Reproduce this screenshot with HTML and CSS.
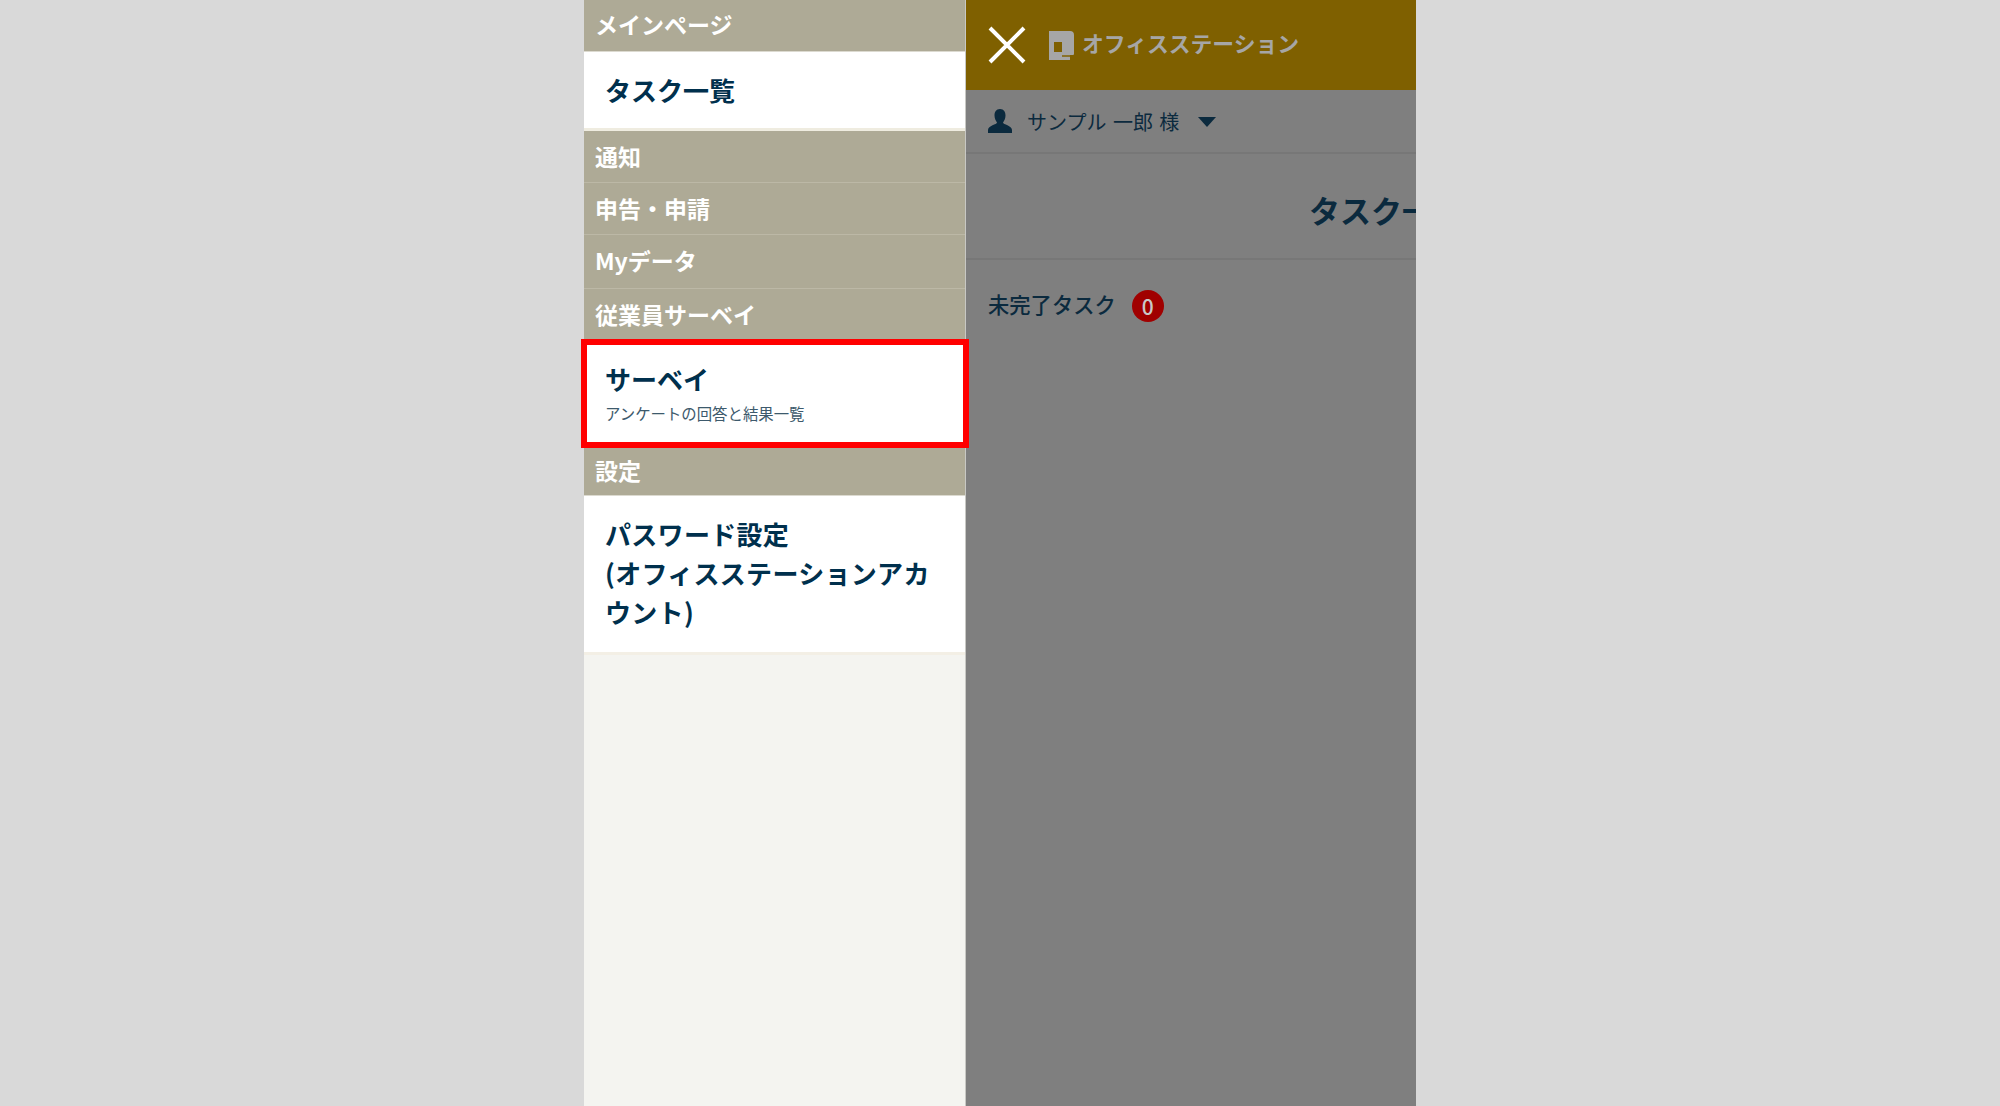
FILE: index.html
```html
<!DOCTYPE html>
<html lang="ja">
<head>
<meta charset="utf-8">
<title>タスク一覧</title>
<link rel="stylesheet" href="styles.css">
</head>
<body>
<div class="phone">
  <nav class="side">
    <div class="sec sec-first">メインページ</div>
    <a class="item item-task">タスク一覧</a>
    <div class="sec sec-a">通知</div>
    <div class="sec sec-a">申告・申請</div>
    <div class="sec sec-b">Myデータ</div>
    <div class="sec sec-c">従業員サーベイ</div>
    <a class="item item-survey">
      <span class="item-title">サーベイ</span>
      <span class="item-sub">アンケートの回答と結果一覧</span>
    </a>
    <div class="sec sec-last">設定</div>
    <a class="item item-pass">パスワード設定<br>(オフィスステーションアカウント)</a>
  </nav>
  <main class="main">
    <header class="top">
      <svg class="close" viewBox="0 0 38 38" width="38" height="38"><path d="M2 2 L36 36 M36 2 L2 36" stroke="#fff" stroke-width="4" fill="none"/></svg>
      <svg class="logo" viewBox="0 0 25 29" width="25" height="29"><path fill-rule="evenodd" d="M0 0 L21 0 Q25 0 25 4 L25 23 Q25 24 24 24 L21 24 L21 29 L0 29 Z M5 11 L5 21 L13 21 L13 11 Z" fill="#a6a6a6"/><path d="M13 25 L21 25" stroke="#7f6000" stroke-width="1.500" fill="none"/></svg>
      <span class="logo-text">オフィスステーション</span>
    </header>
    <div class="user">
      <svg class="user-icon" viewBox="0 0 24 24" width="24" height="24"><path d="M12 0 C16 0 17.5 3 17.5 6.5 C17.5 10 16 12 15 13.500 C15 15.500 24 16.500 24 21 L24 24 L0 24 L0 21 C0 16.500 9 15.500 9 13.500 C8 12 6.500 10 6.500 6.500 C6.500 3 8 0 12 0 Z" fill="#0b2a3e"/></svg>
      <span class="user-name">サンプル 一郎 様</span>
      <span class="caret"></span>
    </div>
    <h1 class="title">タスク一覧</h1>
    <div class="pending">
      <span class="pending-label">未完了タスク</span>
      <span class="badge">0</span>
    </div>
  </main>
</div>
</body>
</html>
```
FILE: styles.css
```css
* { box-sizing: border-box; }
html, body { margin: 0; height: 100%; }
body {
  background: #d9d9d9;
  font-family: "Noto Sans CJK JP", "Liberation Sans", sans-serif;
  overflow: hidden;
}
.phone {
  display: flex;
  width: 832px;
  height: 1106px;
  margin-left: 584px;
}
.side {
  width: 382px;
  flex: none;
  background: #f4f4f0;
  border-right: 1px solid #c8c8c4;
  display: flex;
  flex-direction: column;
}
.sec {
  display: flex;
  align-items: center;
  padding-left: 11px;
  background: #aeaa96;
  color: #fff;
  font-size: 23px;
  font-weight: 700;
  line-height: 1;
  border-bottom: 1px solid #bcb8a6;
}
.sec-first { height: 52px; padding-bottom: 2px; border-bottom-color: #dcdad0; }
.sec-a { height: 52px; }
.sec-b { height: 54px; padding-bottom: 2px; }
.sec-c { height: 50px; border-bottom: 0; }
.sec-last { height: 48px; padding-bottom: 2px; border-bottom-color: #dcdad0; }
.item {
  display: block;
  background: #fff;
  color: #00304d;
  font-weight: 700;
  font-size: 26px;
  padding-left: 21px;
}
.item-task {
  height: 79px;
  line-height: 76px;
  border-bottom: 3px solid #efece0;
}
.item-survey {
  position: relative;
  height: 109px;
  padding-top: 23px;
}
.item-survey::after {
  content: "";
  position: absolute;
  left: -3px;
  right: -4px;
  top: 0;
  bottom: 0;
  border: 6px solid #ff0000;
}
.item-title { display: block; line-height: 34px; }
.item-sub {
  display: block;
  margin-top: 6px;
  font-size: 15.4px;
  font-weight: 400;
  line-height: 22px;
  color: #3d5a6c;
}
.item-pass {
  height: 159px;
  padding-top: 18px;
  padding-right: 18px;
  line-height: 39px;
  letter-spacing: 0.3px;
  border-bottom: 3px solid #f3efe5;
}
.main {
  flex: 1;
  min-width: 0;
  background: #7f7f7f;
  overflow: hidden;
}
.top {
  height: 90px;
  background: #7f6000;
  display: flex;
  align-items: center;
  padding-left: 22px;
}
.close { flex: none; }
.logo { flex: none; margin-left: 23px; }
.logo-text {
  margin-left: 8px;
  margin-bottom: 5px;
  font-size: 21.8px;
  font-weight: 700;
  color: #a6a6a6;
  white-space: nowrap;
}
.user {
  height: 64px;
  display: flex;
  align-items: center;
  padding-left: 22px;
  border-bottom: 2px solid #777;
  color: #0b2a3e;
}
.user-name { margin-left: 15px; font-size: 20px; word-spacing: 2px; white-space: nowrap; }
.caret {
  margin-left: 19px;
  margin-top: 2px;
  border-left: 9px solid transparent;
  border-right: 9px solid transparent;
  border-top: 10px solid #0b2a3e;
}
.title {
  margin: 0;
  height: 106px;
  padding: 6px 0 0 343px;
  font-size: 31px;
  font-weight: 700;
  line-height: 100px;
  color: #0b2a3e;
  white-space: nowrap;
  border-bottom: 2px solid #777;
}
.pending {
  display: flex;
  align-items: center;
  padding: 28px 0 0 22px;
  color: #0b2a3e;
}
.pending-label { margin-bottom: 5px; font-size: 21.3px; font-weight: 500; }
.badge {
  margin-left: 16px;
  width: 32px;
  height: 32px;
  border-radius: 50%;
  background: #a00000;
  color: #c8c8c8;
  font-size: 21px;
  font-weight: 500;
  display: flex;
  align-items: center;
  justify-content: center;
}
```
